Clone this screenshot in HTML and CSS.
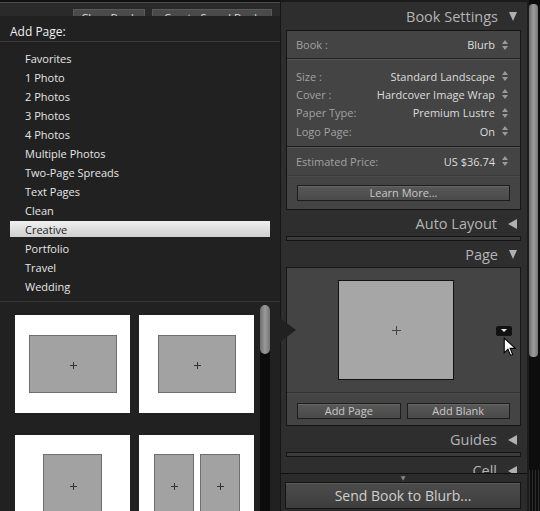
FILE: index.html
```html
<!DOCTYPE html>
<html>
<head>
<meta charset="utf-8">
<link rel="stylesheet" href="styles.css">
</head>
<body>
<div class="app">
  <div class="left">
    <div class="toolbar">
      <span class="tbtn clear">Clear Book</span>
      <span class="tbtn saved">Create Saved Book</span>
    </div>
    <div class="popup">
      <div class="popup-title">Add Page:</div>
      <ul class="menu">
        <li>Favorites</li>
        <li>1 Photo</li>
        <li>2 Photos</li>
        <li>3 Photos</li>
        <li>4 Photos</li>
        <li>Multiple Photos</li>
        <li>Two-Page Spreads</li>
        <li>Text Pages</li>
        <li>Clean</li>
        <li class="active">Creative</li>
        <li>Portfolio</li>
        <li>Travel</li>
        <li>Wedding</li>
      </ul>
      <div class="thumbs-area">
        <div class="thumbs">
          <div class="thumb"><div class="pg pg-land1"><i class="plus"></i></div></div>
          <div class="thumb"><div class="pg pg-land2"><i class="plus"></i></div></div>
          <div class="thumb tall"><div class="pg pg-port"><i class="plus"></i></div></div>
          <div class="thumb tall two"><div class="pg pg-half"><i class="plus"></i></div><div class="pg pg-half"><i class="plus"></i></div></div>
        </div>
        <div class="pscroll"><div class="pscroll-thumb"></div></div>
      </div>
      <div class="pointer"></div>
    </div>
  </div>

  <div class="right">
    <div class="panels">
      <div class="hdr"><span>Book Settings</span><i class="tri down"></i></div>
      <div class="box">
        <div class="row book"><span class="lbl">Book :</span><span class="val">Blurb</span><svg class="spin" viewBox="0 0 6 10"><path d="M3 0L6 4H0Z M3 10L6 6H0Z"/></svg></div>
        <div class="group specs">
          <div class="row"><span class="lbl">Size :</span><span class="val">Standard Landscape</span><svg class="spin" viewBox="0 0 6 10"><path d="M3 0L6 4H0Z M3 10L6 6H0Z"/></svg></div>
          <div class="row"><span class="lbl">Cover :</span><span class="val">Hardcover Image Wrap</span><svg class="spin" viewBox="0 0 6 10"><path d="M3 0L6 4H0Z M3 10L6 6H0Z"/></svg></div>
          <div class="row"><span class="lbl">Paper Type:</span><span class="val">Premium Lustre</span><svg class="spin" viewBox="0 0 6 10"><path d="M3 0L6 4H0Z M3 10L6 6H0Z"/></svg></div>
          <div class="row"><span class="lbl">Logo Page:</span><span class="val">On</span><svg class="spin" viewBox="0 0 6 10"><path d="M3 0L6 4H0Z M3 10L6 6H0Z"/></svg></div>
        </div>
        <div class="group price">
          <div class="row"><span class="lbl">Estimated Price:</span><span class="val">US $36.74</span><svg class="spin" viewBox="0 0 6 10"><path d="M3 0L6 4H0Z M3 10L6 6H0Z"/></svg></div>
        </div>
        <div class="btnrow"><span class="btn wide">Learn More...</span></div>
      </div>

      <div class="hdr"><span>Auto Layout</span><i class="tri left"></i></div>
      <div class="bar"></div>

      <div class="hdr"><span>Page</span><i class="tri down"></i></div>
      <div class="box pagebox">
        <div class="preview">
          <div class="square"><i class="plus big"></i></div>
          <span class="dd"><i></i></span>
          <svg class="cursor" viewBox="0 0 12 19"><path d="M1 1V15L4.5 11.5L7 17.5L9 16.6L6.6 10.8H11.5Z" fill="#fff" stroke="#000" stroke-width="1"/></svg>
        </div>
        <div class="btnrow two">
          <span class="btn">Add Page</span>
          <span class="btn">Add Blank</span>
        </div>
      </div>

      <div class="hdr"><span>Guides</span><i class="tri left"></i></div>
      <div class="bar"></div>

      <div class="hdr"><span>Cell</span><i class="tri left"></i></div>
    </div>
    <div class="footer">
      <div class="more">&#9660;</div>
      <div class="send">Send Book to Blurb...</div>
    </div>
  </div>

  <div class="scroll">
    <div class="scroll-thumb"></div>
    <div class="scroll-grip"></div>
  </div>
</div>
</body>
</html>
```

FILE: styles.css
```css
* { box-sizing: border-box; }
html, body { margin: 0; padding: 0; }
body {
  background: #262626;
  font-family: "Open Sans", "DejaVu Sans", sans-serif;
  font-size: 11px;
  color: #ddd;
  overflow: hidden;
}
.app {
  width: 540px;
  height: 511px;
  display: grid;
  grid-template-columns: 280px 247px 13px;
  overflow: hidden;
}

/* ---------- left ---------- */
.left {
  position: relative;
  z-index: 2;
  display: flex;
  flex-direction: column;
  height: 511px;
}
.toolbar {
  height: 16px;
  overflow: hidden;
  background: #2a2a2a;
  border-top: 2px solid #111;
  box-shadow: inset 0 1px 0 #4a4a4a;
  position: relative;
}
.tbtn {
  position: absolute;
  top: 7px;
  height: 16px;
  line-height: 16px;
  background: #4a4a4a;
  border: 1px solid #5a5a5a;
  color: #ddd;
  font-size: 11px;
  text-align: center;
}
.tbtn.clear { left: 73px; width: 72px; }
.tbtn.saved { left: 152px; width: 120px; }

.popup {
  flex: 1;
  background: #212121;
  position: relative;
  display: flex;
  flex-direction: column;
  min-height: 0;
  border-top-left-radius: 3px;
}
.popup-title {
  height: 26px;
  padding: 8px 0 0 10px;
  font-size: 12px;
  color: #f0f0f0;
  line-height: 16px;
  border-bottom: 1px solid #3a3a3a;
}
.menu {
  list-style: none;
  margin: 0;
  padding: 7px 10px 5px;
  border-bottom: 1px solid #363636;
}
.menu li {
  height: 19px;
  line-height: 19px;
  padding-left: 15px;
  color: #e6e6e6;
  font-size: 11px;
}
.menu li.active {
  color: #1a1a1a;
  background: linear-gradient(#f0f0f0, #cfcfcf) 0 1px / 100% 16px no-repeat;
}
.thumbs-area {
  flex: 1;
  display: flex;
  min-height: 0;
  overflow: hidden;
}
.thumbs {
  padding: 13px 0 0 15px;
  display: grid;
  grid-template-columns: 115px 115px;
  column-gap: 9px;
  row-gap: 22px;
  align-content: start;
  width: 260px;
}
.thumb {
  height: 98px;
  background: #fff;
  display: flex;
  justify-content: center;
  align-items: center;
  gap: 6px;
}
.thumb.tall { align-items: flex-start; padding-top: 19px; }
.pg {
  background: #a2a2a2;
  border: 1px solid #6e6e6e;
  position: relative;
}
.pg-land1 { width: 88px; height: 58px; }
.pg-land2 { width: 78px; height: 58px; }
.pg-port { width: 59px; height: 76px; }
.pg-half { width: 40px; height: 76px; }
.plus {
  position: absolute;
  left: 50%;
  top: 50%;
  width: 7px;
  height: 7px;
  margin: -2px 0 0 -3px;
}
.pg-port .plus, .pg-half .plus { top: 30px; }
.plus::before, .plus::after {
  content: "";
  position: absolute;
  background: #333;
}
.plus::before { left: 0; top: 3px; width: 7px; height: 1px; }
.plus::after { left: 3px; top: 0; width: 1px; height: 7px; }
.plus.big { width: 9px; height: 9px; margin: -4px 0 0 -4px; }
.plus.big::before { top: 4px; width: 9px; background: #444; }
.plus.big::after { left: 4px; height: 9px; background: #444; }

.pscroll {
  width: 10px;
  margin-top: 3px;
  background: #0c0c0c;
  border-radius: 5px 5px 0 0;
  position: relative;
}
.pscroll-thumb {
  height: 49px;
  border-radius: 5px;
  background: linear-gradient(90deg, #6e6e6e, #9a9a9a 50%, #747474);
}
.pointer {
  position: absolute;
  right: -16px;
  top: 302px;
  width: 0;
  height: 0;
  border-top: 12px solid transparent;
  border-bottom: 12px solid transparent;
  border-left: 16px solid #212121;
}

/* ---------- right ---------- */
.right {
  background: #2e2e2e;
  border-left: 1px solid #161616;
  display: flex;
  flex-direction: column;
  height: 511px;
  box-shadow: inset 0 2px 0 #1a1a1a;
  padding-top: 4px;
}
.panels {
  flex: 1;
  overflow: hidden;
  padding: 0 6px 0 5px;
  min-height: 0;
}
.hdr {
  height: 26px;
  display: flex;
  align-items: center;
  justify-content: flex-end;
  font-size: 14.5px;
  color: #b4b4b4;
  padding-right: 4px;
  padding-top: 1px;
}
.panels > .hdr:first-child { padding-top: 0; padding-bottom: 1px; }
.tri {
  width: 0; height: 0;
  margin-left: 11px;
}
.tri.down {
  border-left: 4.5px solid transparent;
  border-right: 4.5px solid transparent;
  border-top: 9px solid #b0b0b0;
}
.tri.left {
  border-top: 5px solid transparent;
  border-bottom: 5px solid transparent;
  border-right: 9px solid #b0b0b0;
}
.box {
  background: #444;
  border: 1px solid #161616;
}
.row {
  display: flex;
  align-items: center;
  height: 18px;
  padding: 0 12px 0 9px;
  font-size: 11px;
}
.lbl { color: #a2a2a2; flex: 1; }
.val { color: #dcdcdc; }
.spin { width: 6px; height: 10px; margin-left: 7px; fill: #9a9a9a; }
.row.book { height: 28px; border-bottom: 1px solid #222; }
.group { border-top: 1px solid #555; }
.specs { padding: 7px 0 6px; border-bottom: 1px solid #1c1c1c; }
.specs .row { height: 18.3px; }
.price { padding: 4px 0 5px; border-bottom: 1px solid #3a3a3a; }
.btnrow {
  padding: 8px 10px 8px;
  border-top: 1px solid #4c4c4c;
  display: flex;
  gap: 6px;
}
.btn {
  flex: 1;
  height: 16px;
  line-height: 14px;
  text-align: center;
  font-size: 11px;
  color: #c8c8c8;
  background: linear-gradient(#585858, #4a4a4a);
  border: 1px solid #1d1d1d;
  box-shadow: inset 0 1px 0 #666;
}
.bar {
  height: 5px;
  border: 1px solid #141414;
  background: #3c3c3c;
}
.pagebox { height: 159px; }
.preview {
  height: 125px;
  position: relative;
  padding: 12px 0 0 51px;
  border-bottom: 1px solid #303030;
}
.square {
  width: 116px;
  height: 100px;
  background: #a6a6a6;
  border: 1px solid #111;
  position: relative;
}
.dd {
  position: absolute;
  left: 209px;
  top: 58px;
  width: 16px;
  height: 10px;
  background: #121212;
  border-radius: 2px;
}
.dd i {
  position: absolute;
  left: 5px;
  top: 3px;
  border-left: 3px solid transparent;
  border-right: 3px solid transparent;
  border-top: 3px solid #eee;
}
.cursor {
  position: absolute;
  left: 216px;
  top: 69px;
  width: 13px;
  height: 20px;
}
.pagebox .btnrow { padding-top: 9px; border-top: 1px solid #4e4e4e; }
.footer {
  height: 38px;
  padding: 0 6px 3px 4px;
  border-top: 1px solid #111;
  background: #2b2b2b;
  display: flex;
  flex-direction: column;
}
.more {
  height: 8px;
  line-height: 8px;
  font-size: 6px;
  text-align: center;
  color: #888;
}
.send {
  height: 27px;
  line-height: 25px;
  text-align: center;
  font-size: 14px;
  color: #cfcfcf;
  background: linear-gradient(#4c4c4c, #3d3d3d);
  border: 1px solid #141414;
  box-shadow: inset 0 1px 0 #5a5a5a;
}

/* ---------- scrollbar ---------- */
.scroll {
  background: #0d0d0d;
  border-left: 2px solid #1c1c1c;
  height: 511px;
  display: flex;
  flex-direction: column;
  padding-top: 4px;
}
.scroll-thumb {
  height: 353px;
  width: 9px;
  border-radius: 4px;
  background: linear-gradient(90deg, #6c6c6c, #9c9c9c 50%, #767676);
}
.scroll-grip {
  margin-top: auto;
  height: 41px;
  background: repeating-linear-gradient(90deg, #2c2c2c 0 1px, #0d0d0d 1px 3px);
}
```
